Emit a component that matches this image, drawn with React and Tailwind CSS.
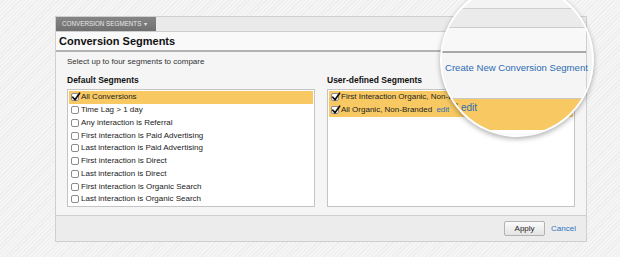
import React from 'react';

const defaultSegments = [
  { label: 'All Conversions', checked: true },
  { label: 'Time Lag > 1 day' },
  { label: 'Any interaction is Referral' },
  { label: 'First interaction is Paid Advertising' },
  { label: 'Last interaction is Paid Advertising' },
  { label: 'First interaction is Direct' },
  { label: 'Last interaction is Direct' },
  { label: 'First interaction is Organic Search' },
  { label: 'Last interaction is Organic Search' },
];

function Checkbox({ checked }) {
  return (
    <span className="relative w-[8px] h-[8px] shrink-0 border border-[#8c8c8c] rounded-[2px] bg-white">
      {checked && (
        <svg className="absolute -left-[1px] -top-[2px] w-[10px] h-[10px]" viewBox="0 0 10 10">
          <path d="M1.8 5.2 L4 7.8 L8.6 1.2" fill="none" stroke="#111" strokeWidth="1.7" strokeLinecap="round" strokeLinejoin="round" />
        </svg>
      )}
    </span>
  );
}

function Row({ checked, children }) {
  return (
    <div className={`flex items-center gap-[2px] h-[12.75px] pl-[2px] whitespace-nowrap ${checked ? 'bg-[#f8c963]' : ''}`}>
      <Checkbox checked={checked} />
      <span className="text-[8px] leading-none text-[#222]">{children}</span>
    </div>
  );
}

function Magnifier() {
  return (
    <div className="absolute left-[440px] top-[-17px] w-[154px] h-[154px] rounded-full overflow-hidden border-2 border-white bg-[#f3f3f3] shadow-[0_2px_5px_rgba(0,0,0,0.3)]">
      <div className="mt-[23px] w-[145px] border-t border-r border-[#cfcfcf]">
        <div className="h-[19px] bg-[#ebebeb] border-b border-[#cdcdcd]" />
        <div className="h-[25px] bg-[#f8f8f8] border-b-2 border-[#a8a8a8]" />
        <div className="h-[45px] bg-[#f5f5f5] pt-[9px] pl-[3px] whitespace-nowrap text-[9.6px] leading-[12px] text-[#2d6cb3]">
          Create New Conversion Segment
        </div>
      </div>
      <div className="h-[32px] bg-[#f8c963] border-t border-[#c8c8c8] pl-[14px] pt-[3px] flex items-start gap-[3px] text-[10px] leading-[12px]">
        <span className="text-[#333]">'</span>
        <span className="text-[#2d6cb3]">edit</span>
      </div>
      <div className="h-[40px] bg-white" />
    </div>
  );
}

export default function App() {
  return (
    <div className="relative w-[620px] h-[257px] overflow-hidden font-['Liberation_Sans',Arial,sans-serif] bg-[repeating-linear-gradient(135deg,#f5f5f5_0px,#f5f5f5_2px,#ededed_2px,#ededed_3px)]">
      <div className="absolute left-0 top-0 pt-[16px] pl-[55px]">
        <div className="w-[532px] border border-[#cfcfcf] bg-[#f5f5f5]">
          {/* tab row */}
          <div className="h-[15px] bg-[#eaeaea] border-b border-[#cdcdcd] flex">
            <div className="w-[100px] h-full bg-gradient-to-b from-[#858585] to-[#707070] flex items-center pl-[6px] gap-[3px] text-[6.3px] text-[#e6e6e6] whitespace-nowrap">
              CONVERSION SEGMENTS
              <span className="text-[6px] leading-none">▾</span>
            </div>
          </div>

          {/* header */}
          <div className="h-[20px] bg-[#f9f9f9] border-b-2 border-[#b3b3b3] flex items-center pl-[3px]">
            <h1 className="text-[11px] font-bold text-[#111]">Conversion Segments</h1>
          </div>

          {/* body */}
          <div className="px-[11px] pt-[5px] pb-[8px]">
            <p className="text-[8px] leading-[10px] text-[#333]">Select up to four segments to compare</p>
            <div className="grid grid-cols-2 gap-[12px] mt-[8px]">
              <div>
                <h2 className="text-[8.5px] leading-[10px] font-bold text-[#111]">Default Segments</h2>
                <div className="mt-[4px] h-[118px] bg-white border border-[#c4c4c4] p-[1px]">
                  {defaultSegments.map((s) => (
                    <Row key={s.label} checked={s.checked}>{s.label}</Row>
                  ))}
                </div>
              </div>
              <div>
                <h2 className="text-[8.5px] leading-[10px] font-bold text-[#111]">User-defined Segments</h2>
                <div className="mt-[4px] h-[118px] bg-white border border-[#c4c4c4] p-[1px]">
                  <Row checked>First Interaction Organic, Non-Branded</Row>
                  <Row checked>
                    All Organic, Non-Branded <span className="text-[#2d6cb3] ml-[2px]">edit</span>
                  </Row>
                </div>
              </div>
            </div>
          </div>

          {/* footer */}
          <div className="h-[26px] bg-[#ececec] border-t border-[#cfcfcf] flex items-center justify-end gap-[6px] pr-[10px]">
            <button className="h-[15px] w-[41px] border border-[#b3b3b3] rounded-[2px] bg-gradient-to-b from-[#fbfbfb] to-[#e3e3e3] text-[8px] text-[#222]">
              Apply
            </button>
            <a className="text-[8px] text-[#2a74be]">Cancel</a>
          </div>
        </div>
      </div>

      <Magnifier />
    </div>
  );
}
